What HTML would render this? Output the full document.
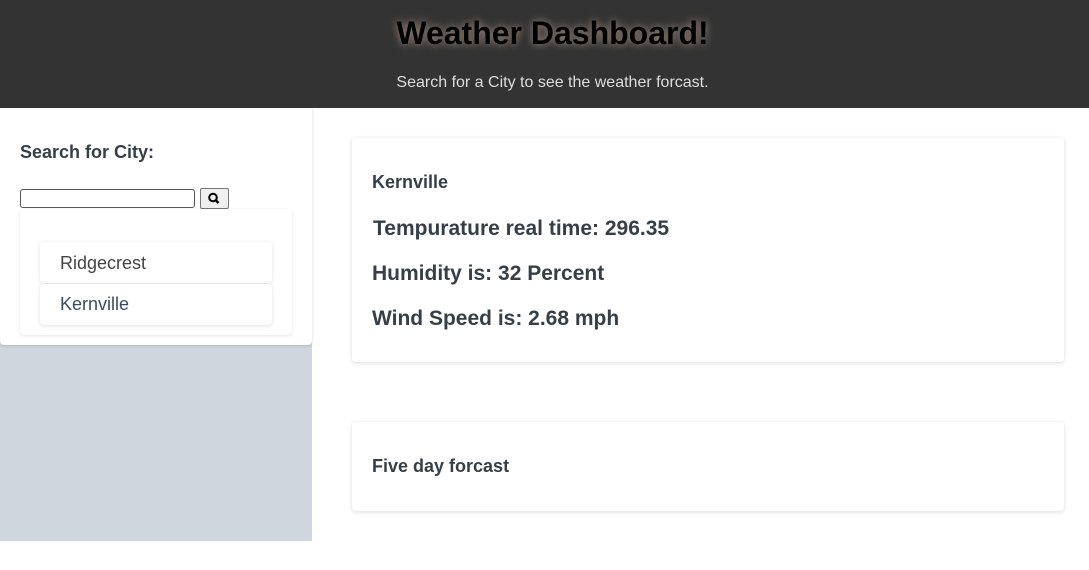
<!DOCTYPE html>
<html><head><style>
*{box-sizing:border-box;margin:0;padding:0}
body{width:1089px;height:570px;background:#fff;font-family:"Liberation Sans",Arial,sans-serif;color:#363f48;position:relative;overflow:hidden}
header{position:absolute;left:0;top:0;width:1089px;height:108px;background:#333;text-align:center;padding-left:16px}
h1{position:absolute;left:16px;right:0;top:15px;font-size:32px;font-weight:bold;color:#000;text-shadow:0 0 8px rgba(200,170,150,.8)}
.sub{position:absolute;left:16px;right:0;top:74px;font-size:16px;color:#ddd}
.side{position:absolute;left:0;top:108px;width:312px;height:433px;background:#cfd6de}
.sc{position:absolute;left:0;top:108px;width:312px;height:237px;background:#fff;border-radius:0 0 4px 4px;box-shadow:0 1px 3px rgba(0,0,0,.15)}
.card{position:absolute;background:#fff;border-radius:4px;box-shadow:0 1px 5px rgba(0,0,0,.15)}
.b{font-weight:bold}
</style></head><body>
<header><h1>Weather Dashboard!</h1><div class="sub">Search for a City to see the weather forcast.</div></header>
<div class="side"></div>
<div class="sc">
<div class="b" style="position:absolute;left:20px;top:34px;font-size:18px">Search for City:</div>
<div style="position:absolute;left:20px;top:81px;width:175px;height:19px;border:1px solid #555;border-radius:3px"></div>
<div style="position:absolute;left:200px;top:80px;width:29px;height:21px;border:1px solid #777;border-radius:2px;background:#efefef">
<svg width="27" height="19" viewBox="0 0 27 19"><circle cx="12" cy="8.5" r="3.8" fill="none" stroke="#000" stroke-width="2"/><line x1="14.8" y1="11.3" x2="17.5" y2="14" stroke="#000" stroke-width="2.4"/></svg></div>
<div class="card" style="left:20px;top:101px;width:272px;height:126px;box-shadow:0 1px 3px rgba(0,0,0,.1)">
<div class="card" style="left:20px;top:33px;width:232px;height:41px;box-shadow:0 1px 4px rgba(0,0,0,.12)"><div style="position:absolute;left:20px;top:11px;font-size:18px;color:#444">Ridgecrest</div></div>
<div class="card" style="left:20px;top:75px;width:232px;height:41px;box-shadow:0 1px 4px rgba(0,0,0,.12)"><div style="position:absolute;left:20px;top:10px;font-size:18px;color:#3a4a66">Kernville</div></div>
</div>
</div>
<div class="card" style="left:352px;top:138px;width:712px;height:224px">
<div class="b" style="position:absolute;left:20px;top:34px;font-size:18px">Kernville</div>
<div class="b" style="position:absolute;left:21px;top:79px;font-size:21px">Tempurature real time: 296.35</div>
<div class="b" style="position:absolute;left:20px;top:124px;font-size:21px">Humidity is: 32 Percent</div>
<div class="b" style="position:absolute;left:20px;top:169px;font-size:21px">Wind Speed is: 2.68 mph</div>
</div>
<div class="card" style="left:352px;top:422px;width:712px;height:89px">
<div class="b" style="position:absolute;left:20px;top:34px;font-size:18px">Five day forcast</div>
</div>
</body></html>
